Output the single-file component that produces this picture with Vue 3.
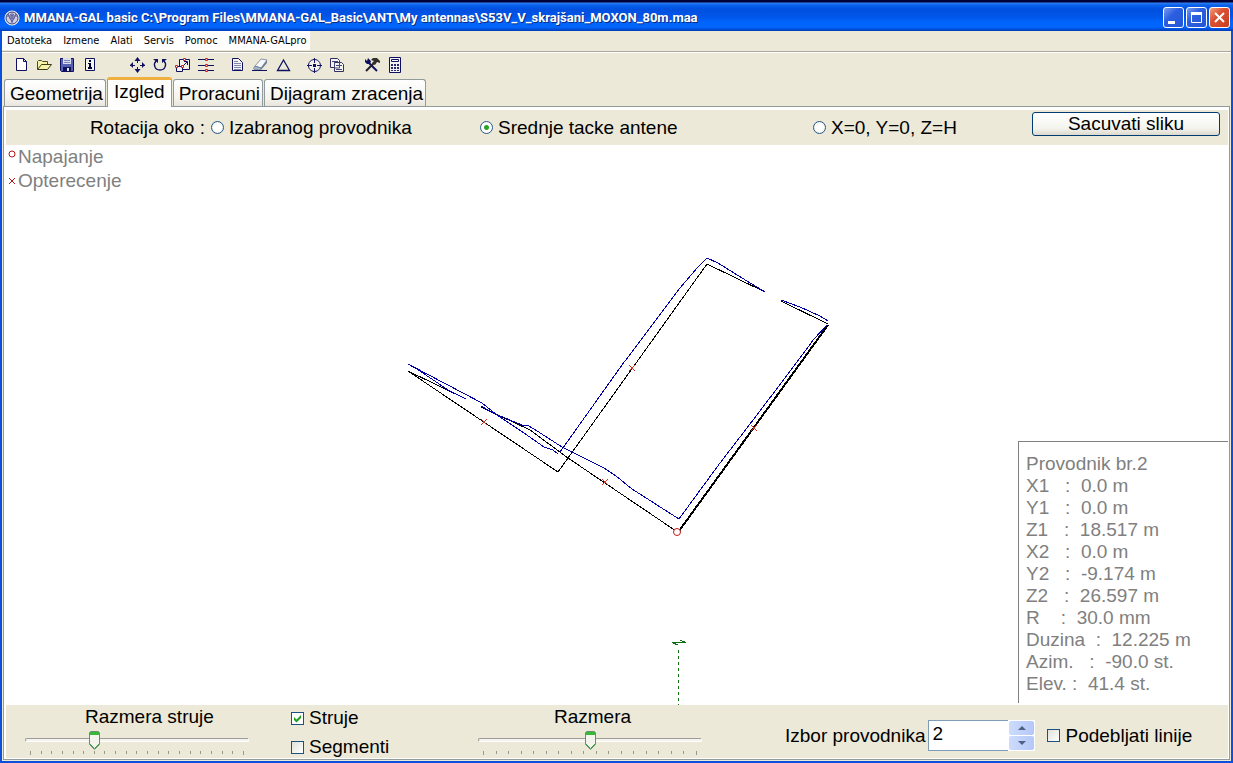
<script setup>
import { ref } from 'vue'

const menus = ['Datoteka', 'Izmene', 'Alati', 'Servis', 'Pomoc', 'MMANA-GALpro']

const navy = '#101060'
const red = '#d02020'

const toolGroups = [
  [
    { name: 'Novo', shapes: [{ d: 'M3.5 1.5H10.5L13.5 4.5V13.5H3.5ZM10.5 1.5V4.5H13.5', fill: '#fff', stroke: navy }] },
    { name: 'Otvori', shapes: [
      { d: 'M1.5 12.5V4.5L2.5 3.5H5.5L6.5 4.5H11.5V7.5', fill: '#f6f3a8', stroke: '#4c4c20' },
      { d: 'M1.5 12.5L5.5 7.5H15.5L11.5 12.5Z', fill: '#f6f3a8', stroke: '#3c3c18' } ] },
    { name: 'Sacuvaj', shapes: [
      { d: 'M1.5 1.5H14.5V14.5H2.5L1.5 13.5Z', fill: '#5560b0', stroke: navy },
      { d: 'M4 1H12V7H4Z', fill: '#d8dcec', stroke: 'none' },
      { d: 'M5 3.5H11M5 5.5H11', fill: 'none', stroke: '#8088b8' },
      { d: 'M4 10H12V15H4Z', fill: navy, stroke: 'none' },
      { d: 'M8 11H10V14H8Z', fill: '#e4e6f0', stroke: 'none' } ] },
    { name: 'Info', shapes: [
      { d: 'M3.5 1.5H12.5V13.5H3.5Z', fill: '#f4f4ee', stroke: navy },
      { d: 'M7 3H9V5H7ZM6 6H9V10H10V12H6V10H7V7H6Z', fill: '#000030', stroke: 'none' } ] }
  ],
  [
    { name: 'Pomeri', shapes: [
      { d: 'M8.5 1V6M8.5 10V15M1 8.5H6M11 8.5H16', fill: 'none', stroke: navy },
      { d: 'M8.5 0L11.5 4H5.5ZM8.5 16L5.5 12H11.5ZM1 8L4 5V11ZM16 8L13 5V11Z', fill: navy, stroke: 'none' } ] },
    { name: 'Rotiraj', shapes: [
      { d: 'M4 4C1 7 2.5 13 8 13S15 7 12 4', fill: 'none', stroke: navy, w: 1.4 },
      { d: 'M1 2H6V6ZM15 2H10V6Z', fill: navy, stroke: 'none' } ] },
    { name: 'Skaliraj', shapes: [
      { d: 'M4.500 2.500H14.500V12.500H4.500Z', fill: '#f2f1e8', stroke: navy },
      { d: 'M1.500 9.500H7.500V14.500H1.500Z', fill: '#f2f1e8', stroke: navy },
      { d: 'M8 9L12 5M9 4.500H12.500V8', fill: 'none', stroke: navy },
      { d: 'M8.500 1.500H10.500V3.500H8.500ZM.500 8.500H2.500V10.500H.500ZM6.500 8.500H8.500V10.500H6.500Z', fill: '#fff', stroke: red } ] },
    { name: 'Segmentacija', shapes: [
      { d: 'M0 2.5H16M0 8.5H16M0 13.5H16', fill: 'none', stroke: navy },
      { d: 'M7.5 1.5H9.5V3.5H7.5ZM7.5 7.5H9.5V9.5H7.5ZM7.5 12.5H9.5V14.5H7.5Z', fill: '#fbb', stroke: red } ] }
  ],
  [
    { name: 'Lista', shapes: [
      { d: 'M3.5 1.5H9.5L13.5 5.5V13.5H3.5Z', fill: '#f4f4f4', stroke: navy },
      { d: 'M5 4.5H9M5 6.5H12M5 8.5H12M5 10.5H12M5 12.5H12', fill: 'none', stroke: '#8086a8' } ] },
    { name: 'Brisi', shapes: [
      { d: 'M3 9L9 2L15 3L9 11Z', fill: '#f7f8fa', stroke: '#8a96a4' },
      { d: 'M3 9L9 11L8 13H3L1.5 11.5Z', fill: '#a4b4c4', stroke: '#7888a0' },
      { d: 'M9 11L15 3V6L9 13Z', fill: '#6c8098', stroke: 'none' },
      { d: 'M0 13.5H15', fill: 'none', stroke: navy } ] },
    { name: 'Trougao', shapes: [{ d: 'M2.5 13.5L8.5 3L14.5 13.5Z', fill: 'none', stroke: navy, w: 1.3 }] }
  ],
  [
    { name: 'Centriraj', shapes: [
      { d: 'M8.5 2.5A6 6 0 1 1 8.4 2.5Z', fill: '#f2f1ea', stroke: navy },
      { d: 'M8.5 1V6M8.5 11V16M1 8.5H6M11 8.5H16', fill: 'none', stroke: navy },
      { d: 'M7 7H10V10H7Z', fill: navy, stroke: 'none' } ] },
    { name: 'Kopiraj', shapes: [
      { d: 'M1.5 1.5H8.5L10.5 3.5V10.5H1.5Z', fill: '#f4f4f0', stroke: '#303060' },
      { d: 'M5.5 5.5H12.5L14.5 7.5V14.5H5.5Z', fill: '#f4f4f0', stroke: '#303060' },
      { d: 'M3 4.5H9M5.5 5V11M10.5 5V11H5M7 8.5H13M7 12.5H13', fill: 'none', stroke: '#484878' } ] }
  ],
  [
    { name: 'Podesavanja', shapes: [
      { d: 'M4 5L13 14', fill: 'none', stroke: navy, w: 2 },
      { d: 'M1 2L3 4L4 1L7 4L6 7L3 7L1 5Z', fill: navy, stroke: 'none' },
      { d: 'M10 6L2 14', fill: 'none', stroke: '#202030', w: 2 },
      { d: 'M7 3L9 1H13L16 4V6L13 5L11 8L8 6L10 4Z', fill: '#303028', stroke: 'none' } ] },
    { name: 'Kalkulator', shapes: [
      { d: 'M2.5 .5H13.5V15.5H2.5Z', fill: '#f4f4f4', stroke: navy },
      { d: 'M4.5 2.5H11.5V4.5H4.5Z', fill: '#fff', stroke: navy },
      { d: 'M4 7H6V9H4ZM7 7H9V9H7ZM10 7H12V9H10ZM4 10H6V12H4ZM7 10H9V12H7ZM10 10H12V12H10ZM4 13H6V14H4ZM7 13H9V14H7ZM10 13H12V14H10Z', fill: '#28286c', stroke: 'none' } ] }
  ]
]

const tabs = ['Geometrija', 'Izgled', 'Proracuni', 'Dijagram zracenja']
const activeTab = ref('Izgled')

const pivots = ['Izabranog provodnika', 'Srednje tacke antene', 'X=0, Y=0, Z=H']
const pivot = ref('Srednje tacke antene')

const wires = [
  '466,399 408,371 558,472 707,264 765,292',
  '781,301 828,324',
  '481,407 530,430 568,458 676,531'
]
const currents = [
  '466,399 448,390 417,369 408,364 482,403 497,415 524,433 544,447 553,450 558,454',
  '560,452 622,365 680,288 698,267 707,258 718,263 742,278 765,292',
  '781,300 800,307 820,316 828,321',
  '827,325 814,339 788,374 750,424 720,463 679,519 632,489 616,476 604,468 562,447 534,429 527,425 522,425 493,413 481,406'
]
const loads = [[484, 422], [632, 368], [605, 482], [754, 428]]

const info = [
  'Provodnik br.2',
  'X1   :  0.0 m',
  'Y1   :  0.0 m',
  'Z1   :  18.517 m',
  'X2   :  0.0 m',
  'Y2   :  -9.174 m',
  'Z2   :  26.597 m',
  'R    :  30.0 mm',
  'Duzina  :  12.225 m',
  'Azim.   :  -90.0 st.',
  'Elev. :  41.4 st.'
]

const currentScale = ref(6)
const scale = ref(50)
const showCurrents = ref(true)
const showSegments = ref(false)
const bold = ref(false)
const wire = ref('2')
const step = (n) => { wire.value = String(Math.max(1, Number(wire.value) + n)) }
</script>

<template>
  <div class="window">
    <header class="titlebar">
      <svg class="logo" viewBox="0 0 16 16" aria-hidden="true">
        <circle cx="8" cy="8" r="7" fill="#e8e8f4" stroke="#fff" />
        <circle cx="8" cy="8" r="6" fill="#cfd0e6" stroke="#404070" />
        <path d="M4 4L8 12L12 4M3 6H13M5 8H11M8 3V13M6 4L8 6L10 4" fill="none" stroke="#585890" />
      </svg>
      <h1>MMANA-GAL basic C:\Program Files\MMANA-GAL_Basic\ANT\My antennas\S53V_V_skrajšani_MOXON_80m.maa</h1>
      <div class="controls">
        <button class="win" aria-label="Minimize"><svg viewBox="0 0 19 19"><path d="M4 13H11V16H4Z" fill="#fff" /></svg></button>
        <button class="win" aria-label="Maximize"><svg viewBox="0 0 19 19"><path d="M4.5 5V14.5H14.5V5" fill="none" stroke="#fff" /><path d="M4 4H15V7H4Z" fill="#fff" /></svg></button>
        <button class="win close" aria-label="Close"><svg viewBox="0 0 19 19"><path d="M5 5L14 14M14 5L5 14" fill="none" stroke="#fff" stroke-width="2" /></svg></button>
      </div>
    </header>

    <nav class="menubar">
      <div class="menus">
        <button v-for="m in menus" :key="m">{{ m }}</button>
      </div>
    </nav>

    <div class="toolbar">
      <div v-for="(group, g) in toolGroups" :key="g" class="group" :class="'group-' + g">
        <button v-for="t in group" :key="t.name" class="tool" :aria-label="t.name">
          <svg viewBox="0 0 16 16">
            <path v-for="(s, i) in t.shapes" :key="i" :d="s.d" :fill="s.fill" :stroke="s.stroke" :stroke-width="s.w || 1" />
          </svg>
        </button>
      </div>
    </div>

    <div class="tabs" role="tablist">
      <button v-for="t in tabs" :key="t" role="tab" class="tab" :class="{ active: t === activeTab }" :aria-selected="t === activeTab" @click="activeTab = t">{{ t }}</button>
    </div>

    <main class="page">
      <div class="rotation">
        <span class="caption">Rotacija oko :</span>
        <label v-for="p in pivots" :key="p" class="option">
          <input v-model="pivot" type="radio" name="pivot" :value="p">{{ p }}
        </label>
        <button class="save">Sacuvati sliku</button>
      </div>

      <section class="canvas">
        <svg class="plot" viewBox="6 145 1222 560" aria-label="Antena">
          <g fill="none" stroke="#000" shape-rendering="crispEdges">
            <polyline v-for="w in wires" :key="w" :points="w" />
            <path d="M828 325L679 531" stroke-width="2" />
          </g>
          <g fill="none" stroke="#0000a8" shape-rendering="crispEdges">
            <polyline v-for="c in currents" :key="c" :points="c" />
          </g>
          <g fill="none" stroke="#d83020">
            <path v-for="[x, y] in loads" :key="x" shape-rendering="crispEdges" :d="`M${x - 3} ${y - 3}l6 6m0 -6l-6 6`" />
            <circle cx="677" cy="532" r="3.500" fill="#fff" stroke="#c01818" />
          </g>
          <g fill="none" stroke="#107010" shape-rendering="crispEdges">
            <path d="M678.5 650V705" stroke-dasharray="3 3" />
            <path d="M672 642.5H686M680 640.5H682M682 641.5H685M673 643.5H676M675 644.5H678" />
          </g>
        </svg>
        <ul class="legend">
          <li><svg viewBox="0 0 8 8"><circle cx="4" cy="4" r="3" /></svg>Napajanje</li>
          <li><svg viewBox="0 0 8 8"><path d="M1 1L7 7M7 1L1 7" /></svg>Opterecenje</li>
        </ul>
        <aside class="info">
          <div v-for="line in info" :key="line">{{ line }}</div>
        </aside>
      </section>

      <footer class="bottom">
        <div class="slider">
          <label class="wide" for="current-scale">Razmera struje</label>
          <input id="current-scale" v-model="currentScale" type="range" min="0" max="20">
          <div class="ticks"><i v-for="n in 21" :key="n"></i></div>
        </div>
        <div class="checks">
          <label><input v-model="showCurrents" type="checkbox">Struje</label>
          <label><input v-model="showSegments" type="checkbox">Segmenti</label>
        </div>
        <div class="slider">
          <label class="narrow" for="scale">Razmera</label>
          <input id="scale" v-model="scale" type="range" min="0" max="100">
          <div class="ticks"><i v-for="n in 18" :key="n"></i></div>
        </div>
        <div class="wire">
          <label for="wire">Izbor provodnika</label>
          <div class="spin">
            <input id="wire" v-model="wire" type="text">
            <div class="arrows">
              <button aria-label="Vise" @click="step(1)"><svg viewBox="0 0 8 4"><path d="M4 0L8 4H0Z" /></svg></button>
              <button aria-label="Manje" @click="step(-1)"><svg viewBox="0 0 8 4"><path d="M4 4L0 0H8Z" /></svg></button>
            </div>
          </div>
          <label class="boldlines"><input v-model="bold" type="checkbox">Podebljati linije</label>
        </div>
      </footer>
    </main>
  </div>
</template>

<style>
body {
  background: #ece9d8;
}
</style>

<style scoped>
.window {
  box-sizing: border-box;
  min-height: 100vh;
  display: flex;
  flex-direction: column;
  background: #ece9d8;
  border: solid #0a50dc;
  border-width: 0 2px 2px;
  font: 19px/22px "Liberation Sans", Arial, sans-serif;
  color: #000;
}
button {
  font: inherit;
  color: inherit;
  padding: 0;
  margin: 0;
  border: 0;
  background: none;
}
svg {
  display: block;
}

.titlebar {
  display: flex;
  align-items: center;
  height: 31px;
  margin: 0 -2px;
  padding: 4px 3px 0 4px;
  box-sizing: border-box;
  background: linear-gradient(#000038 0, #000038 2px, #3080f0 3px, #0a62ee 5px, #0050e0 9px, #0054e6 16px, #0064fc 22px, #0066ff 27px, #0048cc 30px, #003cb0 31px);
}
.logo {
  width: 16px;
  height: 16px;
}
h1 {
  flex: 1;
  margin: 0 0 0 4px;
  font: bold 13px/20px Roboto, sans-serif;
  color: #fff;
  text-shadow: 1px 1px 0 #0a2a80;
  white-space: nowrap;
}
.controls {
  display: flex;
  gap: 2px;
}
.win {
  box-sizing: border-box;
  width: 21px;
  height: 21px;
  border: 1px solid #fff;
  border-radius: 3px;
  background: linear-gradient(135deg, #7a9cf0, #2c5ee0 40%, #2456d8);
}
.close {
  background: linear-gradient(135deg, #f0a080, #dc5030 40%, #c84020);
}

.menubar {
  display: flex;
  height: 19px;
  padding-bottom: 1px;
  border-bottom: 1px solid #aca899;
  box-shadow: 0 1px 0 #fff;
}
.menus {
  display: flex;
  gap: 11px;
  padding: 0 4px 0 5px;
  background: #fff;
  font: 11px/18px "DejaVu Sans Condensed", sans-serif;
}

.toolbar {
  display: flex;
  height: 25px;
  align-items: center;
  padding-left: 7px;
}
.group {
  display: flex;
}
.group-1 {
  margin-left: 24px;
}
.group-2,
.group-3 {
  margin-left: 8px;
}
.group-4 {
  margin-left: 12px;
}
.tool {
  display: flex;
  justify-content: center;
  width: 23px;
}
.tool svg {
  width: 16px;
  height: 16px;
}

.tabs {
  display: flex;
  align-items: flex-end;
  gap: 1px;
  height: 29px;
  padding-left: 2px;
}
.tab {
  box-sizing: border-box;
  height: 27px;
  padding: 2px 2px 0 5px;
  border: 1px solid #919b9c;
  border-bottom: 0;
  border-radius: 3px 3px 0 0;
  background: linear-gradient(#fff, #f4f3ee 70%, #e8e6dc);
}
.tab.active {
  position: relative;
  height: 30px;
  margin: 0 0 -1px;
  padding: 0 6px 4px;
  border-top: 3px solid #f0b040;
  background: #fdfdfb;
}

.page {
  flex: 1;
  display: flex;
  flex-direction: column;
  margin: 0 1px 1px;
  padding: 3px 1px 1px 2px;
  border: 1px solid #919b9c;
  background: #fff;
}
.rotation {
  display: grid;
  grid-template-columns: 205fr 269fr 333fr 213fr 202px;
  align-items: center;
  height: 35px;
  background: #ece9d8;
}
.caption {
  text-align: right;
  padding-right: 6px;
}
.option {
  display: flex;
  align-items: center;
  white-space: nowrap;
}
input[type="radio"] {
  appearance: none;
  box-sizing: border-box;
  width: 13px;
  height: 13px;
  margin: 0 5px 0 0;
  border: 1px solid #285888;
  border-radius: 50%;
  background: radial-gradient(#fff 40%, #e4e4dc);
}
input[type="radio"]:checked {
  background: radial-gradient(#28a428 0, #28a428 2px, #fff 3px);
}
.save {
  box-sizing: border-box;
  align-self: start;
  height: 24px;
  margin: 2px 8px 0 6px;
  border: 1px solid #003c74;
  border-radius: 3px;
  background: linear-gradient(#fff, #f4f4ee 70%, #dcd8cc);
}

.canvas {
  position: relative;
  flex: 1;
  min-height: 420px;
}
.plot {
  position: absolute;
  inset: 0;
  width: 100%;
  height: 100%;
}
.legend {
  position: relative;
  margin: 0;
  padding: 0 0 0 2px;
  list-style: none;
  line-height: 24px;
  color: #808080;
}
.legend li {
  display: flex;
}
.legend svg {
  width: 8px;
  height: 8px;
  margin: 5px 2px 0 0;
  fill: none;
  stroke: #b81818;
}
.legend li + li svg {
  margin-top: 8px;
}
.info {
  position: absolute;
  right: 0;
  bottom: 2px;
  box-sizing: border-box;
  width: 210px;
  padding: 11px 0 8px 7px;
  border: solid #808080;
  border-width: 1px 0 0 1px;
  color: #808080;
  white-space: pre;
}

.bottom {
  display: grid;
  grid-template-columns: 266fr 187fr 307fr 443fr;
  height: 53px;
  padding-left: 19px;
  background: #ece9d8;
}
.slider {
  width: 224px;
}
.slider label {
  display: block;
  line-height: 24px;
}
.wide {
  padding-left: 60px;
}
.narrow {
  padding-left: 76px;
}
input[type="range"] {
  appearance: none;
  display: block;
  width: 100%;
  height: 20px;
  margin: 1px 0;
  background: none;
}
input[type="range"]::-webkit-slider-runnable-track {
  box-sizing: border-box;
  height: 4px;
  border: 1px solid #fff;
  border-top-color: #9d9c99;
  border-left-color: #9d9c99;
  border-radius: 2px;
  background: #f4f3ee;
}
input[type="range"]::-webkit-slider-thumb {
  appearance: none;
  width: 11px;
  height: 19px;
  margin-top: -8px;
  background: url("data:image/svg+xml,%3Csvg xmlns='http://www.w3.org/2000/svg' viewBox='0 0 11 19'%3E%3Cpath d='M.5 1.5L1.5.5H9.5L10.5 1.5V13.5L5.5 18.5L.5 13.5Z' fill='%23f4f4ee' stroke='%23708878'/%3E%3Cpath d='M1 1H10V4H1Z' fill='%2338b838'/%3E%3Cpath d='M1 13L5.5 17.5L10 13' fill='none' stroke='%2338a838'/%3E%3C/svg%3E");
}
.ticks {
  display: flex;
  justify-content: space-between;
  height: 4px;
  padding: 0 5px;
}
.ticks i {
  width: 1px;
  height: 3px;
  background: #9a988c;
}
.ticks i:first-child,
.ticks i:last-child {
  height: 4px;
}
.checks {
  display: flex;
  flex-direction: column;
  gap: 7px;
  padding-top: 2px;
}
.checks label,
.boldlines {
  display: flex;
  align-items: center;
}
input[type="checkbox"] {
  appearance: none;
  box-sizing: border-box;
  width: 13px;
  height: 13px;
  margin: 0 5px 0 0;
  border: 1px solid #1c5180;
  background: linear-gradient(135deg, #e0e0da, #fff);
}
input[type="checkbox"]:checked {
  background: url("data:image/svg+xml,%3Csvg xmlns='http://www.w3.org/2000/svg' viewBox='0 0 11 11'%3E%3Cpath d='M2 4L4.500 6.500L9 2V5L4.500 9.500L2 7Z' fill='%2321a121'/%3E%3C/svg%3E") #fff;
}
.wire {
  display: flex;
  align-items: center;
  padding-top: 8px;
  white-space: nowrap;
}
.spin {
  display: flex;
  height: 31px;
  margin: 0 12px 0 3px;
}
.spin input {
  box-sizing: border-box;
  width: 80px;
  height: 31px;
  padding: 0 3px 3px;
  border: 1px solid #7f9db9;
  border-right: 0;
  background: #fff;
  font: inherit;
}
.arrows {
  display: flex;
  flex-direction: column;
  gap: 1px;
  padding: 1px;
  background: #fff;
}
.arrows button {
  display: flex;
  align-items: center;
  justify-content: center;
  width: 25px;
  height: 14px;
  border-radius: 2px;
  background: linear-gradient(90deg, #cddcfd, #b4c8f8);
}
.arrows svg {
  width: 8px;
  height: 4px;
  fill: #4d6185;
}
</style>
